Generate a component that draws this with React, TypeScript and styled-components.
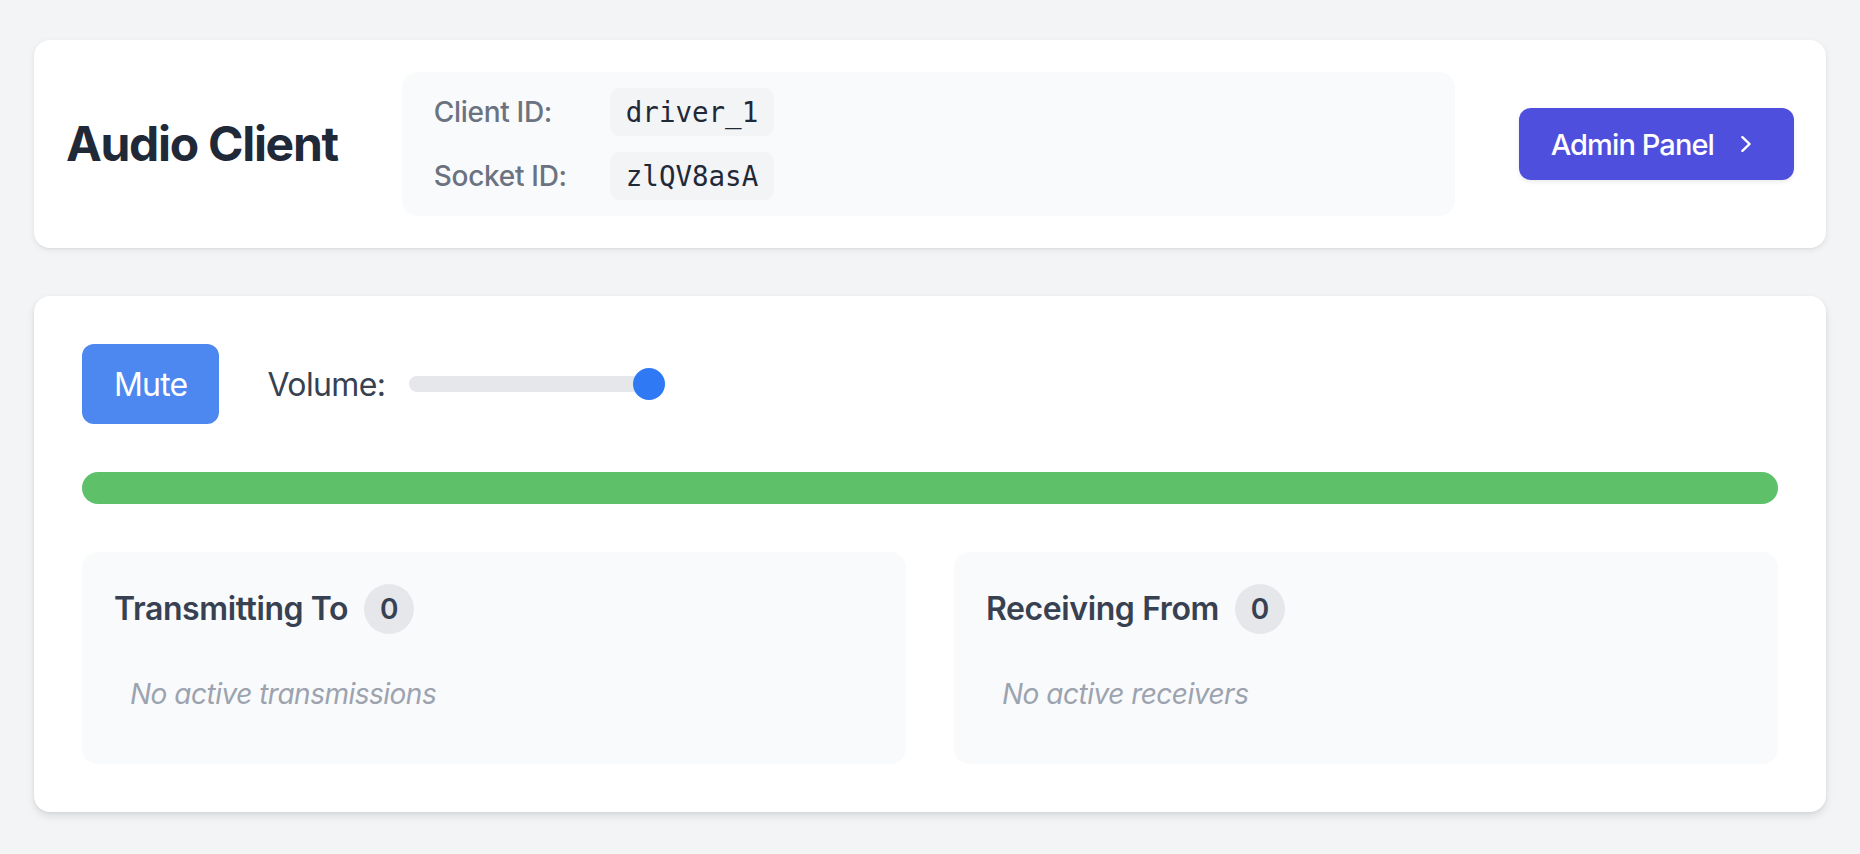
import React from "react";
import styled, { createGlobalStyle } from "styled-components";

const GlobalStyle = createGlobalStyle`
  html, body {
    margin: 0;
    padding: 0;
    background: #f3f4f6;
    font-family: Inter, "Noto Sans", "Liberation Sans", sans-serif;
    -webkit-font-smoothing: antialiased;
  }
  * { box-sizing: border-box; }
`;

const Page = styled.div`
  min-height: 854px;
  padding: 40px 34px;
  display: flex;
  flex-direction: column;
  gap: 48px;
`;

const Card = styled.section`
  background: #ffffff;
  border-radius: 16px;
  box-shadow: 0 2px 6px rgba(0, 0, 0, 0.08), 0 1px 2px rgba(0, 0, 0, 0.04);
`;

const HeaderCard = styled(Card)`
  display: flex;
  align-items: center;
  gap: 64px;
  padding: 32px;
`;

const Title = styled.h1`
  margin: 0;
  font-size: 48px;
  line-height: 64px;
  font-weight: 700;
  color: #1f2937;
  letter-spacing: -1.3px;
  white-space: nowrap;
`;

const InfoBox = styled.div`
  flex: 1;
  background: #f9fafb;
  border-radius: 16px;
  padding: 16px 32px;
  display: grid;
  grid-template-columns: 160px auto;
  justify-content: start;
  align-items: center;
  column-gap: 16px;
  row-gap: 16px;
`;

const Label = styled.span`
  font-size: 28px;
  line-height: 40px;
  color: #6b7280;
  font-weight: 500;
  letter-spacing: -0.3px;
`;

const Code = styled.code`
  justify-self: start;
  font-family: "DejaVu Sans Mono", "Liberation Mono", monospace;
  font-size: 27.5px;
  line-height: 40px;
  padding: 4px 16px;
  background: #f3f4f6;
  border-radius: 10px;
  color: #1f2937;
`;

const AdminButton = styled.button`
  display: flex;
  align-items: center;
  gap: 16px;
  height: 72px;
  padding: 0 32px;
  border: none;
  border-radius: 12px;
  background: #4f4fde;
  color: #ffffff;
  font-family: inherit;
  font-size: 29px;
  font-weight: 500;
  letter-spacing: -0.9px;
  box-shadow: 0 2px 4px rgba(0, 0, 0, 0.08);
  cursor: pointer;
  white-space: nowrap;
`;

const MainCard = styled(Card)`
  padding: 48px;
  display: flex;
  flex-direction: column;
  gap: 48px;
  box-shadow: 0 4px 8px rgba(0, 0, 0, 0.1), 0 1px 3px rgba(0, 0, 0, 0.06);
`;

const Controls = styled.div`
  display: flex;
  align-items: center;
  gap: 48px;
`;

const MuteButton = styled.button`
  height: 80px;
  padding: 0 32px;
  border: none;
  border-radius: 12px;
  background: #4d87f0;
  color: #ffffff;
  font-family: inherit;
  font-size: 32px;
  letter-spacing: -0.8px;
  cursor: pointer;
`;

const VolumeGroup = styled.label`
  display: flex;
  align-items: center;
  gap: 24px;
  font-size: 32px;
  letter-spacing: -0.6px;
  color: #374151;
`;

const Slider = styled.input`
  -webkit-appearance: none;
  appearance: none;
  width: 256px;
  height: 16px;
  margin: 0;
  border-radius: 8px;
  background: #e5e7eb;
  outline: none;

  &::-webkit-slider-thumb {
    -webkit-appearance: none;
    appearance: none;
    width: 32px;
    height: 32px;
    border-radius: 50%;
    background: #2f79f5;
    border: none;
    cursor: pointer;
  }
`;

const LevelBar = styled.div`
  height: 32px;
  border-radius: 16px;
  background: #5ec16a;
`;

const Panels = styled.div`
  display: grid;
  grid-template-columns: 1fr 1fr;
  gap: 48px;
`;

const Panel = styled.div`
  background: #f9fafb;
  border-radius: 16px;
  padding: 32px 32px 34px;
`;

const PanelHeader = styled.h2`
  margin: 0 0 24px;
  display: flex;
  align-items: center;
  gap: 16px;
  font-size: 32px;
  line-height: 50px;
  font-weight: 600;
  letter-spacing: -0.4px;
  color: #374151;
`;

const Badge = styled.span`
  display: inline-flex;
  align-items: center;
  justify-content: center;
  width: 50px;
  height: 50px;
  border-radius: 50%;
  background: #e5e7eb;
  color: #374151;
  font-size: 28px;
  font-weight: 600;
  letter-spacing: 0;
`;

const Empty = styled.p`
  margin: 0;
  padding: 16px;
  font-size: 28px;
  line-height: 40px;
  font-style: italic;
  letter-spacing: -0.5px;
  color: #9ca3af;
`;

const ChevronRight = () => (
  <svg width="32" height="32" viewBox="0 0 20 20" fill="currentColor" aria-hidden="true">
    <path
      fillRule="evenodd"
      d="M7.21 14.77a.75.75 0 01.02-1.06L11.168 10 7.23 6.29a.75.75 0 111.04-1.08l4.5 4.25a.75.75 0 010 1.08l-4.5 4.25a.75.75 0 01-1.06-.02z"
      clipRule="evenodd"
    />
  </svg>
);

const panels = [
  { title: "Transmitting To", count: 0, empty: "No active transmissions" },
  { title: "Receiving From", count: 0, empty: "No active receivers" },
];

export default function App() {
  return (
    <>
      <GlobalStyle />
      <Page>
        <HeaderCard>
          <Title>Audio Client</Title>
          <InfoBox>
            <Label>Client ID:</Label>
            <Code>driver_1</Code>
            <Label>Socket ID:</Label>
            <Code>zlQV8asA</Code>
          </InfoBox>
          <AdminButton>
            Admin Panel
            <ChevronRight />
          </AdminButton>
        </HeaderCard>
        <MainCard>
          <Controls>
            <MuteButton>Mute</MuteButton>
            <VolumeGroup>
              Volume:
              <Slider type="range" min={0} max={1} step={0.01} defaultValue={1} />
            </VolumeGroup>
          </Controls>
          <LevelBar />
          <Panels>
            {panels.map((p) => (
              <Panel key={p.title}>
                <PanelHeader>
                  {p.title}
                  <Badge>{p.count}</Badge>
                </PanelHeader>
                <Empty>{p.empty}</Empty>
              </Panel>
            ))}
          </Panels>
        </MainCard>
      </Page>
    </>
  );
}
